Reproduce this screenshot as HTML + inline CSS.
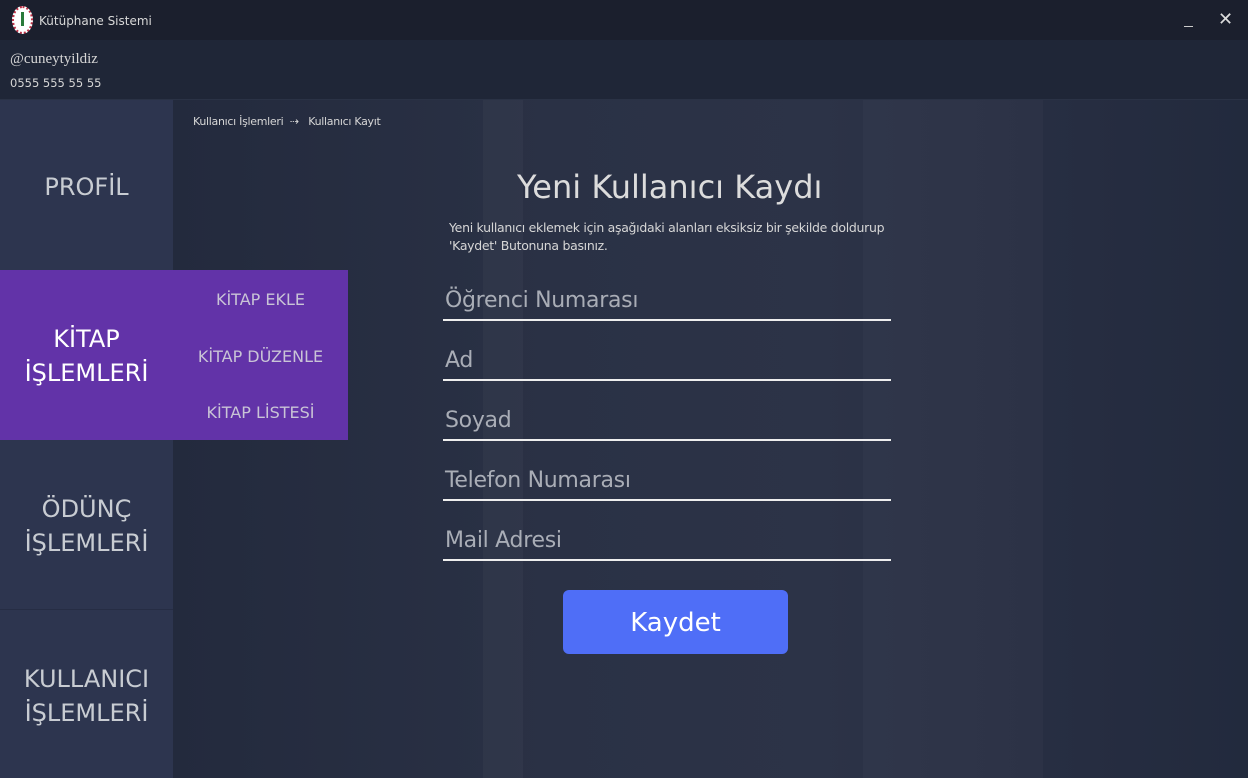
<!DOCTYPE html>
<html><head><meta charset="utf-8"><style>
*{margin:0;padding:0;box-sizing:border-box}
body{width:1248px;height:778px;overflow:hidden;background:#252c40;font-family:"DejaVu Sans","Liberation Sans",sans-serif;position:relative;color:#d0d0d0}
.abs{position:absolute}
#title{left:0;top:0;width:1248px;height:40px;background:#1b1f2d}
#hdr{left:0;top:40px;width:1248px;height:60px;background:#1f2637;border-bottom:1px solid #2a3245}
#side{left:0;top:100px;width:173px;height:678px;background:#2d354f}
#main{left:173px;top:100px;width:1075px;height:678px;background:linear-gradient(90deg,#232a3d 0%,#2a3145 35%,#2c3347 60%,#262d41 85%,#222a3d 100%)}
.side-t{position:absolute;left:0;width:173px;text-align:center;font-size:24px;color:#c8ccd2;line-height:34px}
.inp{position:absolute;left:443px;width:448px;height:2px;background:#eee}
.ph{position:absolute;left:445px;font-size:22px;color:#a9adb6;letter-spacing:-0.3px}
</style></head><body>
<div id="title" class="abs">
 <div class="abs" style="left:12px;top:6px;width:21px;height:28px;border-radius:50%;background:#fff;border:2px dotted #c0344a"></div>
 <div class="abs" style="left:21px;top:12px;width:3px;height:14px;background:#2a7a3a"></div>
 <div class="abs" style="left:39px;top:14px;font-size:12px;color:#d8d8d8">Kütüphane Sistemi</div>
 <div class="abs" style="left:1184px;top:26px;width:9px;height:1px;background:#ccc"></div>
 <div class="abs" style="left:1218px;top:9px;font-size:18px;color:#ddd;font-family:'DejaVu Sans'">✕</div>
</div>
<div id="hdr" class="abs">
 <div class="abs" style="left:10px;top:11px;font-family:'Liberation Serif',serif;font-size:15px;color:#d6d6d6">@cuneytyildiz</div>
 <div class="abs" style="left:10px;top:36px;font-size:11.5px;color:#d6d6d6">0555 555 55 55</div>
</div>
<div id="side" class="abs">
 <div class="side-t" style="top:70px">PROFİL</div>
 <div class="side-t" style="top:392px">ÖDÜNÇ<br>İŞLEMLERİ</div>
 <div class="abs" style="left:0;top:509px;width:173px;height:1px;background:#262d44"></div>
 <div class="side-t" style="top:562px">KULLANICI<br>İŞLEMLERİ</div>
</div>
<div id="main" class="abs">
 <div class="abs" style="left:310px;top:0;width:40px;height:678px;background:rgba(255,255,255,0.03)"></div>
 <div class="abs" style="left:690px;top:0;width:180px;height:678px;background:rgba(255,255,255,0.025)"></div>
 <div class="abs" style="left:20px;top:15px;font-size:11px;color:#d6d6d6;letter-spacing:-0.3px">Kullanıcı İşlemleri &nbsp;⇢ &nbsp; Kullanıcı Kayıt</div>
</div>
<div class="abs" style="left:0;top:270px;width:348px;height:170px;background:#6233a8">
 <div class="abs" style="left:0;top:52px;width:173px;text-align:center;font-size:24px;color:#fff;line-height:34px">KİTAP<br>İŞLEMLERİ</div>
 <div class="abs" style="left:173px;top:20px;width:175px;text-align:center;font-size:16px;color:#c9c4d6">KİTAP EKLE</div>
 <div class="abs" style="left:173px;top:77px;width:175px;text-align:center;font-size:16px;color:#c9c4d6">KİTAP DÜZENLE</div>
 <div class="abs" style="left:173px;top:133px;width:175px;text-align:center;font-size:16px;color:#c9c4d6">KİTAP LİSTESİ</div>
</div>
<div class="abs" style="left:517px;top:168px;font-size:32px;color:#dcdcdc">Yeni Kullanıcı Kaydı</div>
<div class="abs" style="left:449px;top:219px;font-size:12.5px;color:#d6d6d6;line-height:18px;letter-spacing:-0.3px">Yeni kullanıcı eklemek için aşağıdaki alanları eksiksiz bir şekilde doldurup<br>'Kaydet' Butonuna basınız.</div>
<div class="ph" style="top:288px">Öğrenci Numarası</div><div class="inp" style="top:319px"></div>
<div class="ph" style="top:348px">Ad</div><div class="inp" style="top:379px"></div>
<div class="ph" style="top:408px">Soyad</div><div class="inp" style="top:439px"></div>
<div class="ph" style="top:468px">Telefon Numarası</div><div class="inp" style="top:499px"></div>
<div class="ph" style="top:528px">Mail Adresi</div><div class="inp" style="top:559px"></div>
<div class="abs" style="left:563px;top:590px;width:225px;height:64px;border-radius:6px;background:#4f6ef7;color:#fff;font-size:26px;text-align:center;line-height:66px">Kaydet</div>
</body></html>
